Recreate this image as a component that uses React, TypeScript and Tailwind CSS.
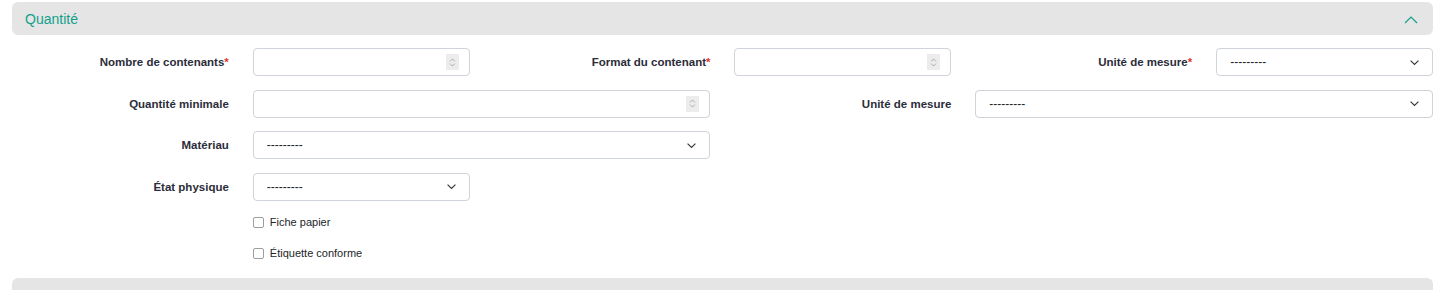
import React from "react";

const font = { fontFamily: '"Liberation Sans", Arial, sans-serif' };

function Chevron({ className = "" }: { className?: string }) {
  return (
    <svg viewBox="0 0 12 8" className={className} fill="none" stroke="currentColor" strokeWidth="1.4">
      <path d="M1.5 1.8 6 6.2l4.5-4.4" />
    </svg>
  );
}

function Label({ text, required }: { text: string; required?: boolean }) {
  return (
    <label className="col-span-2 flex h-7 items-center justify-end pt-[2px] text-[11.5px] font-bold text-[#2b2d3a]">
      {text}
      {required && <span className="text-[#e3342f]">*</span>}
    </label>
  );
}

function NumberField({ span }: { span: string }) {
  return (
    <div className={`${span} relative h-7`}>
      <input className="h-7 w-full rounded border border-[#ced4da] bg-white px-3 text-[12px] outline-none" />
      <div className="absolute right-[11px] top-[6px] flex h-4 w-[13px] flex-col items-center justify-center gap-[1px] bg-[#ececec] text-[#9a9a9a]">
        <svg viewBox="0 0 8 5" className="h-[4px] w-[7px]" fill="none" stroke="currentColor" strokeWidth="1">
          <path d="M1 4.2 4 1.2l3 3" />
        </svg>
        <svg viewBox="0 0 8 5" className="h-[4px] w-[7px]" fill="none" stroke="currentColor" strokeWidth="1">
          <path d="M1 0.8 4 3.8l3-3" />
        </svg>
      </div>
    </div>
  );
}

function SelectField({ span }: { span: string }) {
  return (
    <div className={`${span} flex h-7 items-center justify-between rounded border border-[#ced4da] bg-white pl-[13px] pr-[12px] text-[12px] text-[#212529]`}>
      <span>---------</span>
      <Chevron className="h-[7px] w-[11px] text-[#343a40]" />
    </div>
  );
}

function Check({ text }: { text: string }) {
  return (
    <div className="flex h-[13px] items-center gap-[6px] text-[11px] leading-[13px] text-[#212529]">
      <span className="h-[11px] w-[11px] rounded-[2px] border border-[#9e9e9e] bg-white" />
      {text}
    </div>
  );
}

export default function App() {
  return (
    <div className="h-[290px] overflow-hidden bg-white pt-[2px]" style={font}>
      <div className="ml-3 w-[1421px]">
        <div className="flex h-[33px] items-center justify-between rounded-md bg-[#e5e5e5] pl-[13px] pr-[15px] pt-[2px]">
          <span className="text-[14px] text-[#13a08b]">Quantité</span>
          <svg viewBox="0 0 14 8" className="h-[8px] w-[14px] text-[#13a08b]" fill="none" stroke="currentColor" strokeWidth="1.2">
            <path d="M1 7 7 1l6 6" />
          </svg>
        </div>

        <div className="mt-[13px] grid grid-cols-12 gap-x-6 gap-y-[13.5px]">
          <Label text="Nombre de contenants" required />
          <NumberField span="col-span-2" />
          <Label text="Format du contenant" required />
          <NumberField span="col-span-2" />
          <Label text="Unité de mesure" required />
          <SelectField span="col-span-2" />

          <Label text="Quantité minimale" />
          <NumberField span="col-span-4" />
          <Label text="Unité de mesure" />
          <SelectField span="col-span-4" />

          <Label text="Matériau" />
          <SelectField span="col-span-4" />
          <div className="col-span-6" />

          <Label text="État physique" />
          <SelectField span="col-span-2" />
          <div className="col-span-8" />

          <div className="col-span-2" />
          <div className="col-span-10 flex flex-col gap-[18px] pt-[2px]">
            <Check text="Fiche papier" />
            <Check text="Étiquette conforme" />
          </div>
        </div>

        <div className="mt-[18px] h-[20px] rounded-t-md bg-[#e5e5e5]" />
      </div>
    </div>
  );
}
